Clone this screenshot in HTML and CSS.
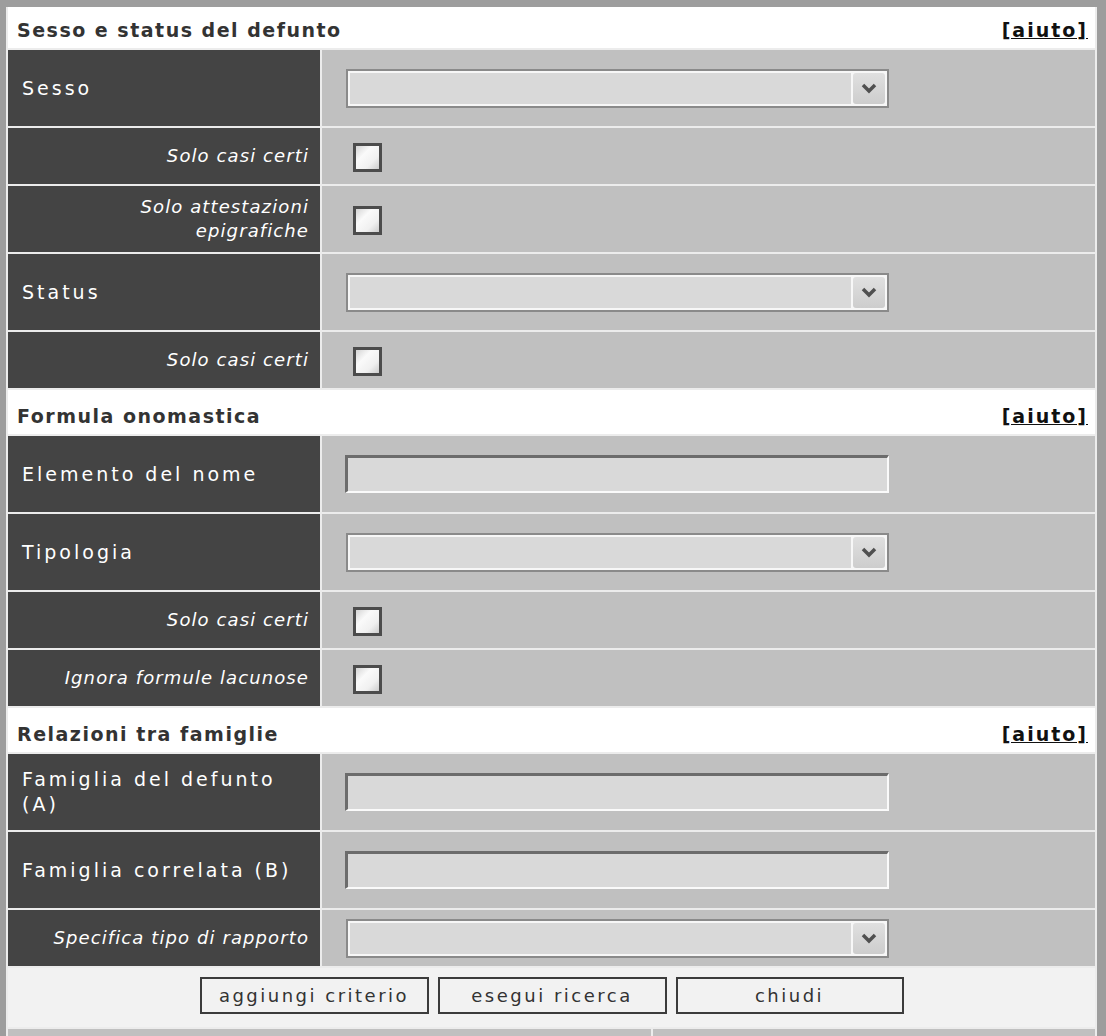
FILE: index.html
```html
<!DOCTYPE html>
<html lang="it">
<head>
  <meta charset="UTF-8" />
  <meta name="viewport" content="width=device-width, initial-scale=1.0" />
  <title>Ricerca avanzata - criteri</title>
  <link rel="stylesheet" href="styles.css">
</head>
<body>

  <form class="search" onsubmit="return false">

    <!-- Sesso e status -->
    <div class="section-title first">
      <span>Sesso e status del defunto</span>
      <a href="#">[aiuto]</a>
    </div>

    <div class="label tall">Sesso</div>
    <div class="value">
      <div class="select">
        <span class="select-field"></span>
        <span class="select-btn"><svg width="16" height="11" viewBox="0 0 16 11"><polyline points="2,2 8,8 14,2" /></svg></span>
      </div>
    </div>

    <div class="label sub check">Solo casi certi</div>
    <div class="value"><input type="checkbox" class="check-box" /></div>

    <div class="label sub double">Solo attestazioni<br>epigrafiche</div>
    <div class="value"><input type="checkbox" class="check-box" /></div>

    <div class="label tall">Status</div>
    <div class="value">
      <div class="select">
        <span class="select-field"></span>
        <span class="select-btn"><svg width="16" height="11" viewBox="0 0 16 11"><polyline points="2,2 8,8 14,2" /></svg></span>
      </div>
    </div>

    <div class="label sub check">Solo casi certi</div>
    <div class="value"><input type="checkbox" class="check-box" /></div>

    <!-- Formula onomastica -->
    <div class="section-title">
      <span>Formula onomastica</span>
      <a href="#">[aiuto]</a>
    </div>

    <div class="label tall">Elemento del nome</div>
    <div class="value"><input type="text" class="text-field" /></div>

    <div class="label tall">Tipologia</div>
    <div class="value">
      <div class="select">
        <span class="select-field"></span>
        <span class="select-btn"><svg width="16" height="11" viewBox="0 0 16 11"><polyline points="2,2 8,8 14,2" /></svg></span>
      </div>
    </div>

    <div class="label sub check">Solo casi certi</div>
    <div class="value"><input type="checkbox" class="check-box" /></div>

    <div class="label sub check">Ignora formule lacunose</div>
    <div class="value"><input type="checkbox" class="check-box" /></div>

    <!-- Relazioni -->
    <div class="section-title">
      <span>Relazioni tra famiglie</span>
      <a href="#">[aiuto]</a>
    </div>

    <div class="label tall">Famiglia del defunto (A)</div>
    <div class="value"><input type="text" class="text-field" /></div>

    <div class="label tall">Famiglia correlata (B)</div>
    <div class="value"><input type="text" class="text-field" /></div>

    <div class="label sub check">Specifica tipo di rapporto</div>
    <div class="value">
      <div class="select">
        <span class="select-field"></span>
        <span class="select-btn"><svg width="16" height="11" viewBox="0 0 16 11"><polyline points="2,2 8,8 14,2" /></svg></span>
      </div>
    </div>

    <div class="actions">
      <button type="button" class="btn">aggiungi criterio</button>
      <button type="submit" class="btn">esegui ricerca</button>
      <button type="button" class="btn">chiudi</button>
    </div>

    <div class="results">
      <div></div>
      <div></div>
    </div>

  </form>

</body>
</html>
```

FILE: styles.css
```css
* {
  box-sizing: border-box;
}

html, body {
  margin: 0;
  padding: 0;
  background: #9d9d9d;
  font-family: "DejaVu Sans", Verdana, sans-serif;
  overflow: hidden;
}

.search {
  margin: 7px 9px 0 6px;
  padding: 0 2px;
  background: #ececec;
  display: grid;
  grid-template-columns: 312px 1fr;
  gap: 2px;
}

.section-title {
  grid-column: 1 / -1;
  height: 44px;
  background: #fff;
  display: flex;
  justify-content: space-between;
  align-items: flex-end;
  padding: 0 7px 7px 9px;
  font-size: 19px;
  line-height: 22px;
  font-weight: bold;
  letter-spacing: 1.5px;
  color: #333;
}

.section-title.first {
  height: 41px;
}

.section-title a {
  color: #111;
  text-decoration: underline;
  letter-spacing: 2px;
}

.label {
  background: #444;
  color: #fff;
  display: flex;
  align-items: center;
  padding: 0 12px 0 14px;
  font-size: 19px;
  line-height: 25px;
  letter-spacing: 3px;
}

.label.sub {
  justify-content: flex-end;
  text-align: right;
  padding-right: 11px;
  font-style: italic;
  font-size: 18px;
  line-height: 24px;
  letter-spacing: 1.1px;
}

.tall {
  height: 76px;
}

.check {
  height: 56px;
}

.double {
  height: 66px;
}

.value {
  background: #c0c0c0;
  display: flex;
  align-items: center;
  padding-left: 24px;
}

/* fake drop-down, drawn like the old skin */
.select {
  width: 543px;
  height: 39px;
  display: flex;
  gap: 2px;
  padding: 2px;
  border: 2px solid #8a8a8a;
  background: #f7f7f7;
}

.select-field {
  flex: 1;
  background: #d9d9d9;
}

.select-btn {
  width: 32px;
  display: flex;
  align-items: center;
  justify-content: center;
  border-radius: 3px;
  background: linear-gradient(#e0e0e0, #cdcdcd);
}

.select-btn polyline {
  fill: none;
  stroke: #505050;
  stroke-width: 3.5;
}

.text-field {
  width: 544px;
  height: 38px;
  margin: 0 0 0 -1px;
  border-style: solid;
  border-width: 3px 2px 2px 3px;
  border-color: #6c6c6c #fafafa #fafafa #6c6c6c;
  background: #d9d9d9;
}

.check-box {
  appearance: none;
  width: 29px;
  height: 29px;
  margin: 2px 0 0 7px;
  border: 3px solid #4c4c4c;
  background: linear-gradient(135deg, #d4d4d4 0%, #fafafa 35%, #f0f0f0 70%, #cccccc 100%);
}

.actions {
  grid-column: 1 / -1;
  height: 59px;
  background: #f2f2f2;
  display: flex;
  justify-content: center;
  align-items: flex-start;
  gap: 9px;
  padding-top: 9px;
}

.btn {
  width: 229px;
  height: 37px;
  border: 2px solid #3c3c3c;
  background: #f2f2f2;
  color: #333;
  font-family: "DejaVu Sans", Verdana, sans-serif;
  font-size: 18px;
  letter-spacing: 2.5px;
  cursor: pointer;
}

.btn:last-child {
  width: 228px;
}

.results {
  grid-column: 1 / -1;
  height: 7px;
  display: grid;
  grid-template-columns: 643px 1fr;
  gap: 2px;
}

.results div {
  background: #c0c0c0;
}
```
